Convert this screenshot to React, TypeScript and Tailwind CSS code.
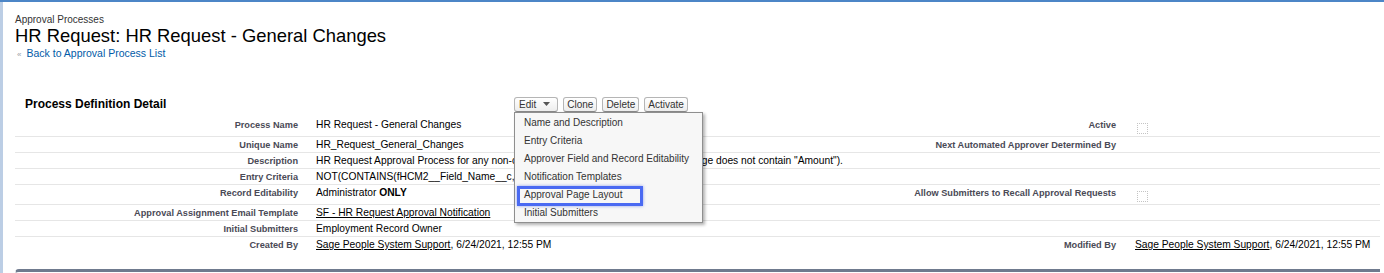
import React from 'react'

const menuItems = [
  'Name and Description',
  'Entry Criteria',
  'Approver Field and Record Editability',
  'Notification Templates',
  'Approval Page Layout',
  'Initial Submitters',
]

function Checkbox() {
  return <span className="block w-[11px] h-[11px] border border-dotted border-[#c4c4c4] bg-white" />
}

type RowProps = {
  label: string
  value?: React.ReactNode
  label2?: string
  value2?: React.ReactNode
  wide?: boolean
  check?: boolean
  last?: boolean
}

function Row({ label, value, label2, value2, wide, check, last }: RowProps) {
  return (
    <div className={`flex ${last ? '' : 'border-b border-[#e6e6e6]'}`}>
      <div className="w-[293px] shrink-0 pr-[10px] pt-[2px] pb-[1px] text-right text-[9.2px] leading-[12px] font-bold text-[#4a4a56]">
        {label}
      </div>
      {wide ? (
        <div className="flex-1 pl-[8px] pt-[2px] pb-[1px] text-[10.25px] leading-[12px] text-black whitespace-nowrap">
          {value}
        </div>
      ) : (
        <>
          <div className="w-[418px] shrink-0 pl-[8px] pt-[2px] pb-[1px] text-[10.25px] leading-[12px] text-black whitespace-nowrap">
            {value}
          </div>
          <div className="w-[400px] shrink-0 pr-[10px] pt-[2px] pb-[1px] text-right text-[9.2px] leading-[12px] font-bold text-[#4a4a56]">
            {label2}
          </div>
          <div className={`flex-1 pl-[9px] ${check ? 'pt-[6px] pb-[2px] pl-[11px]' : 'pt-[2px] pb-[1px]'} text-[10.25px] leading-[12px] text-black whitespace-nowrap`}>
            {check ? <Checkbox /> : value2}
          </div>
        </>
      )}
    </div>
  )
}

function Btn({ children }: { children: React.ReactNode }) {
  return (
    <button className="h-[15px] px-[3px] rounded-[3px] border border-[#b5b5b5] border-b-[#8a8a8a] bg-gradient-to-b from-white to-[#ededed] text-[10px] leading-[11px] text-[#333]">
      {children}
    </button>
  )
}

export default function App() {
  return (
    <div className="w-[1384px] h-[273px] overflow-hidden bg-white border-t-2 border-[#4c86c7] flex font-['Liberation_Sans',Arial,sans-serif]">
      <div className="w-[3px] shrink-0 bg-[#bccee5]" />
      <div className="flex-1 pl-[12px] pr-[4px]">
        {/* page title */}
        <div className="pt-[12px]">
          <div className="text-[10px] leading-[12px] text-[#333]">Approval Processes</div>
          <h1 className="text-[18.4px] leading-[22px] -mt-[1px] text-black">HR Request: HR Request - General Changes</h1>
          <div className="pl-[2px] text-[10.5px] leading-[12px]">
            <span className="text-[#9aa0a8] text-[8px] mr-[5px]">«</span>
            <a className="text-[#015ba7]">Back to Approval Process List</a>
          </div>
        </div>

        {/* detail block */}
        <div className="mt-[32px]">
          <div className="flex h-[22px] items-center">
            <h2 className="w-[499px] shrink-0 pl-[10px] text-[12px] font-bold text-black">Process Definition Detail</h2>
            <div className="relative flex gap-[5px]">
              <button className="h-[15px] pl-[4px] pr-[7px] rounded-[3px] border border-[#b5b5b5] border-b-[#8a8a8a] bg-gradient-to-b from-white to-[#ededed] text-[10px] leading-[11px] text-[#333] flex items-center gap-[7px]">
                Edit
                <svg width="7" height="4" viewBox="0 0 7 4"><path d="M0 0h7L3.5 4z" fill="#555" /></svg>
              </button>
              <Btn>Clone</Btn>
              <Btn>Delete</Btn>
              <Btn>Activate</Btn>

              {/* edit dropdown */}
              <div className="absolute left-0 top-[15px] z-10 w-[189px] pt-[1px] bg-[#f7f7f7] border border-[#8f8f8f] shadow-[2px_2px_3px_rgba(0,0,0,0.3)]">
                {menuItems.map(item => (
                  <div key={item} className="relative h-[18px] pl-[9px] flex items-center text-[10px] text-[#333] whitespace-nowrap">
                    {item}
                    {item === 'Approval Page Layout' && (
                      <span className="absolute left-[2px] top-[0px] w-[126px] h-[20px] border-[3px] border-[#4a6af2] shadow-[0_0_3px_rgba(60,90,230,0.55)]" />
                    )}
                  </div>
                ))}
              </div>
            </div>
          </div>

          <div className="mt-[2px]">
            <Row label="Process Name" value="HR Request - General Changes" label2="Active" check />
            <Row label="Unique Name" value="HR_Request_General_Changes" label2="Next Automated Approver Determined By" />
            <Row
              label="Description"
              wide
              value='HR Request Approval Process for any non-compensation related changes (i.e., Change does not contain "Amount").'
            />
            <Row label="Entry Criteria" wide value='NOT(CONTAINS(fHCM2__Field_Name__c, "Amount"))' />
            <Row
              label="Record Editability"
              value={<>Administrator <b>ONLY</b></>}
              label2="Allow Submitters to Recall Approval Requests"
              check
            />
            <Row
              label="Approval Assignment Email Template"
              value={<a className="underline">SF - HR Request Approval Notification</a>}
            />
            <Row label="Initial Submitters" value="Employment Record Owner" />
            <Row
              label="Created By"
              value={<><a className="underline">Sage People System Support</a>, 6/24/2021, 12:55 PM</>}
              label2="Modified By"
              value2={<><a className="underline">Sage People System Support</a>, 6/24/2021, 12:55 PM</>}
              last
            />
          </div>
        </div>

        {/* next block top edge */}
        <div className="mt-[17px] h-[10px] rounded-tl-[4px] border-t-[3px] border-l border-t-[#6f7a8e] border-l-[#dcdcdc]" />
      </div>
    </div>
  )
}
